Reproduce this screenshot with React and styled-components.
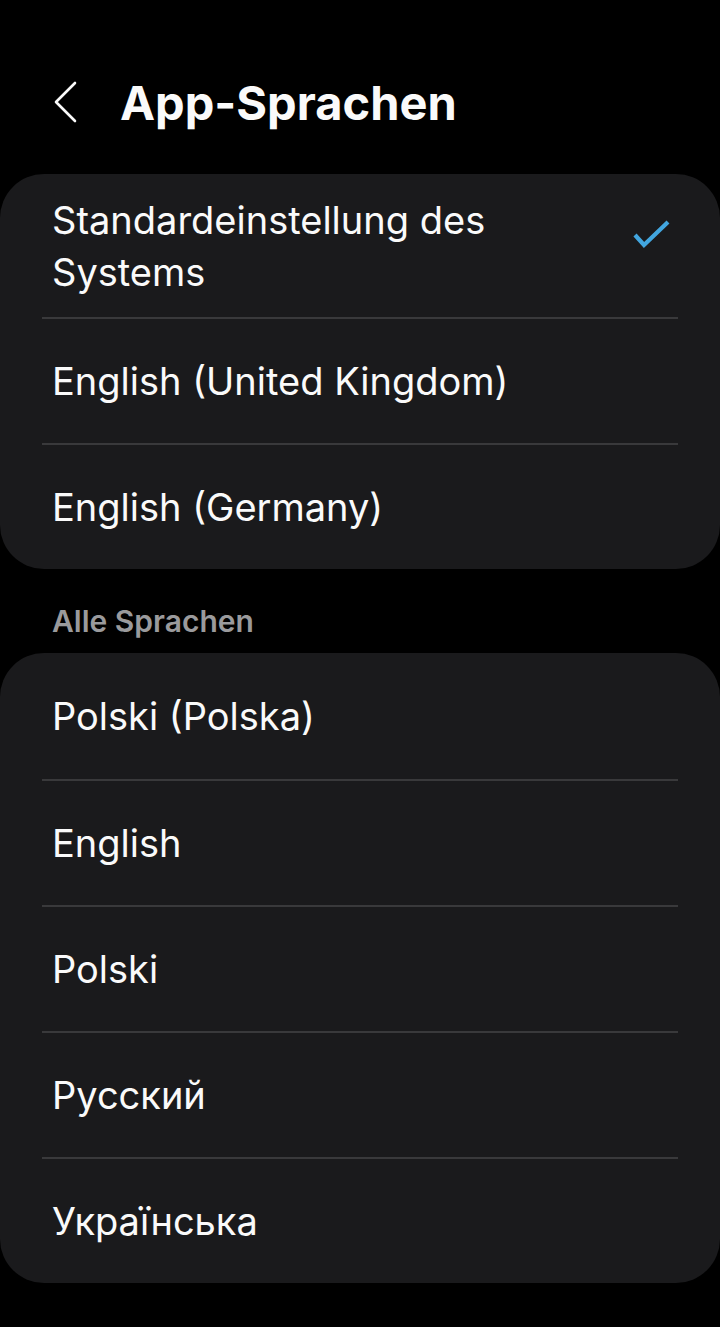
import React from "react";
import styled, { createGlobalStyle } from "styled-components";

const GlobalStyle = createGlobalStyle`
  html, body {
    margin: 0;
    padding: 0;
    background: #000;
  }
  body {
    font-family: Inter, Roboto, "Noto Sans", sans-serif;
    color: #fafafa;
  }
`;

const suggested = [
  { label: "Standardeinstellung des Systems", selected: true },
  { label: "English (United Kingdom)" },
  { label: "English (Germany)" },
];

const allLanguages = ["Polski (Polska)", "English", "Polski", "Русский", "Українська"];

const App = () => {
  return (
    <Page>
      <GlobalStyle />
      <Header>
        <BackButton aria-label="Zurück">
          <svg width="30" height="44" viewBox="0 0 30 44">
            <polyline
              points="21,3 2,22 21,41"
              fill="none"
              stroke="#fafafa"
              strokeWidth="2.6"
              strokeLinecap="round"
              strokeLinejoin="round"
            />
          </svg>
        </BackButton>
        <Title>App-Sprachen</Title>
      </Header>

      <Card>
        {suggested.map((item) => (
          <Row key={item.label}>
            <Label narrow>{item.label}</Label>
            {item.selected && (
              <Check>
                <svg width="40" height="34" viewBox="0 0 40 34">
                  <polyline
                    points="3,17 12,27 36,4"
                    fill="none"
                    stroke="#42a6df"
                    strokeWidth="4.2"
                    strokeLinejoin="miter"
                  />
                </svg>
              </Check>
            )}
          </Row>
        ))}
      </Card>

      <SectionTitle>Alle Sprachen</SectionTitle>

      <Card>
        {allLanguages.map((lang) => (
          <Row key={lang}>
            <Label>{lang}</Label>
          </Row>
        ))}
      </Card>
    </Page>
  );
};

const Page = styled.div`
  min-height: 1327px;
  background: #000;
  padding-bottom: 40px;
  box-sizing: border-box;
`;

const Header = styled.div`
  display: flex;
  align-items: center;
  height: 60px;
  padding: 72px 0 42px 54px;
`;

const BackButton = styled.div`
  display: flex;
  align-items: center;
  width: 66px;
`;

const Title = styled.h1`
  margin: 0;
  font-size: 47px;
  font-weight: 700;
  letter-spacing: 0;
  color: #fafafa;
`;

const Card = styled.div`
  background: #1a1a1c;
  border-radius: 44px;
  overflow: hidden;
`;

const Row = styled.div`
  display: flex;
  align-items: center;
  justify-content: space-between;
  min-height: 126px;
  padding: 19.5px 48px 19.5px 52px;
  box-sizing: border-box;

  & + & {
    border-top: 2px solid #39393b;
    margin: 0 42px;
    padding-left: 10px;
    padding-right: 6px;
  }
`;

const Label = styled.span`
  font-size: 38px;
  line-height: 52px;
  color: #fafafa;
  max-width: ${(p) => (p.narrow ? "500px" : "none")};
`;

const Check = styled.div`
  display: flex;
  align-items: center;
  margin-top: -22px;
`;

const SectionTitle = styled.div`
  padding: 36px 52px 16px;
  font-size: 30px;
  line-height: 32px;
  font-weight: 600;
  color: #9a9a9c;
`;

export default App;
